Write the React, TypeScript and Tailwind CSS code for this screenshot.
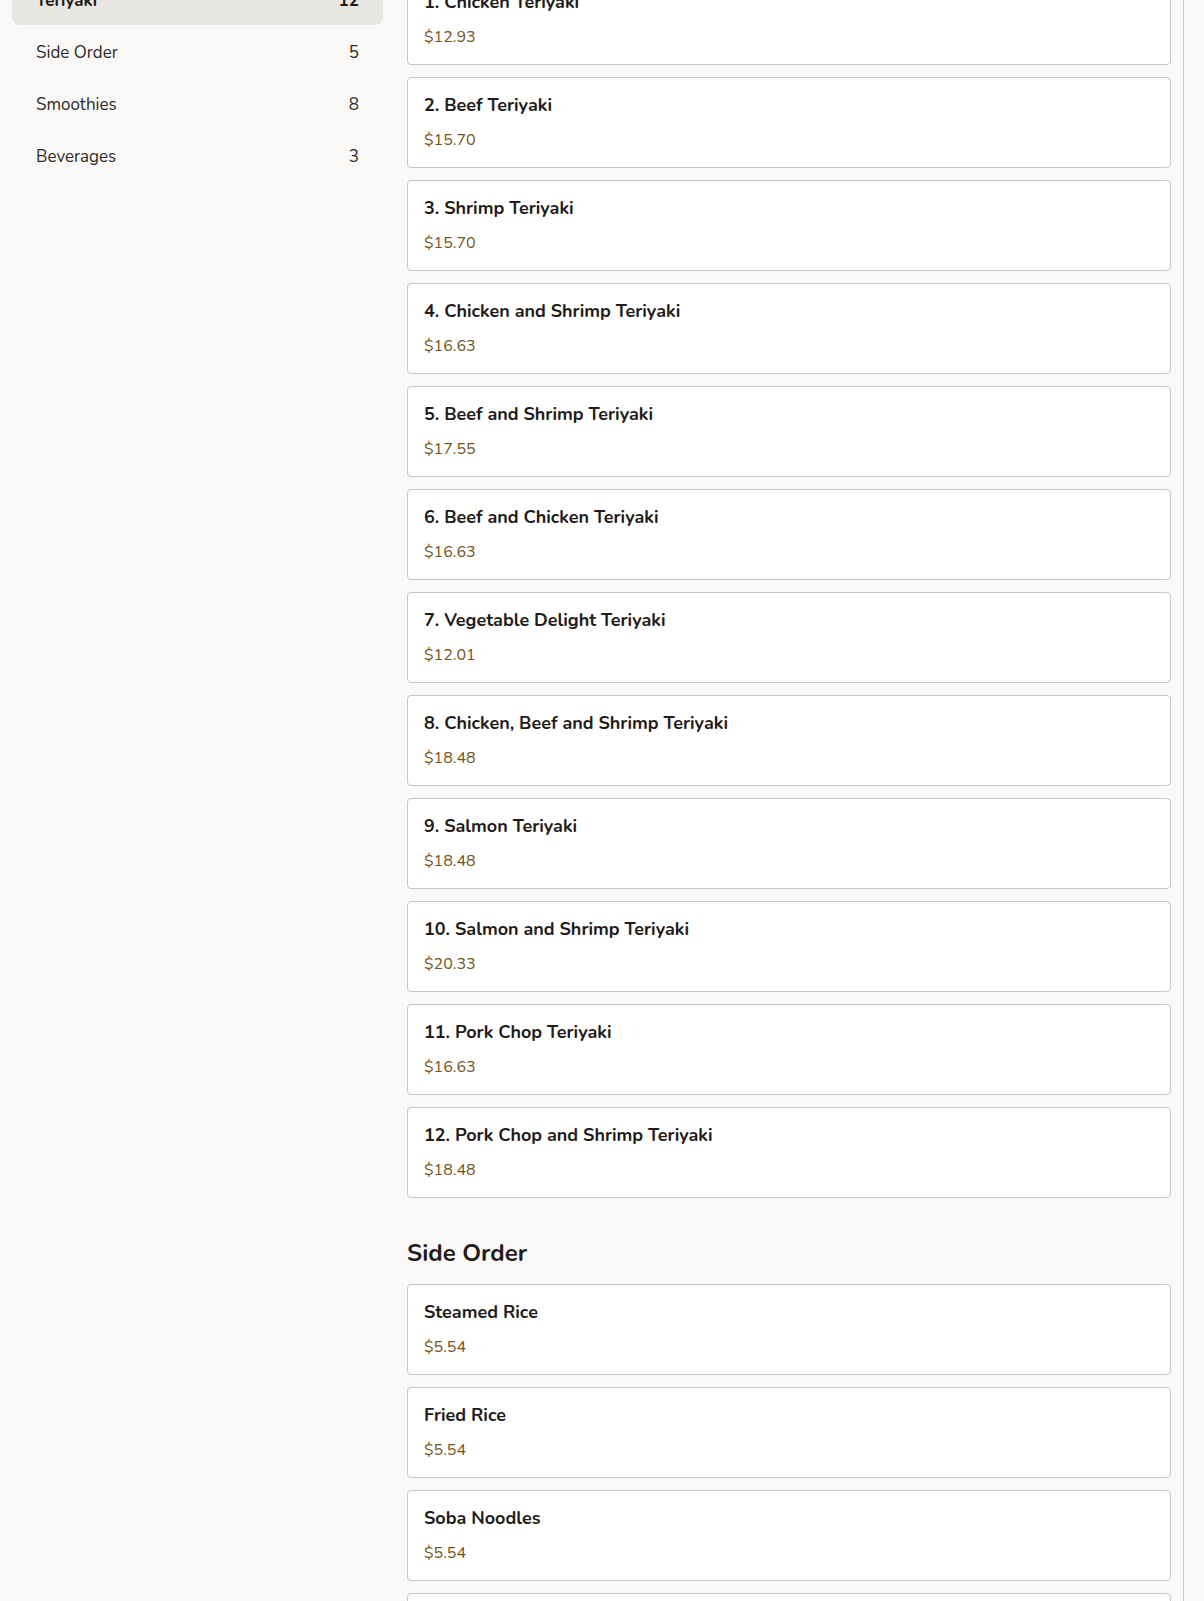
const categories = [
  { name: "Teriyaki", count: 12 },
  { name: "Side Order", count: 5 },
  { name: "Smoothies", count: 8 },
  { name: "Beverages", count: 3 },
];

const sections = [
  {
    title: "Teriyaki",
    items: [
      { name: "1. Chicken Teriyaki", price: 12.93 },
      { name: "2. Beef Teriyaki", price: 15.7 },
      { name: "3. Shrimp Teriyaki", price: 15.7 },
      { name: "4. Chicken and Shrimp Teriyaki", price: 16.63 },
      { name: "5. Beef and Shrimp Teriyaki", price: 17.55 },
      { name: "6. Beef and Chicken Teriyaki", price: 16.63 },
      { name: "7. Vegetable Delight Teriyaki", price: 12.01 },
      { name: "8. Chicken, Beef and Shrimp Teriyaki", price: 18.48 },
      { name: "9. Salmon Teriyaki", price: 18.48 },
      { name: "10. Salmon and Shrimp Teriyaki", price: 20.33 },
      { name: "11. Pork Chop Teriyaki", price: 16.63 },
      { name: "12. Pork Chop and Shrimp Teriyaki", price: 18.48 },
    ],
  },
  {
    title: "Side Order",
    items: [
      { name: "Steamed Rice", price: 5.54 },
      { name: "Fried Rice", price: 5.54 },
      { name: "Soba Noodles", price: 5.54 },
      { name: "Gyoza", price: 6.47 },
      { name: "Miso Soup", price: 3.69 },
    ],
  },
];

const App = () => {
  const active = "Teriyaki";

  return (
    <div
      className="h-[1601px] overflow-hidden bg-[#faf9f7] text-[#231b17]"
      style={{ fontFamily: '"Nunito", "Lato", "Noto Sans", sans-serif' }}
    >
      <div className="flex">
        {/* Category list */}
        <aside className="w-[395px] shrink-0 px-3">
          <nav className="-mt-[23px] flex flex-col gap-1">
            {categories.map((c) => (
              <button
                key={c.name}
                className={`flex items-center justify-between rounded-lg px-6 py-3 text-left text-[17px] leading-6 ${
                  c.name === active
                    ? "bg-[#e7e6e3] font-bold text-[#1f1a17]"
                    : "text-[#2e2a27]"
                }`}
              >
                <span>{c.name}</span>
                <span>{c.count}</span>
              </button>
            ))}
          </nav>
        </aside>

        {/* Menu */}
        <main className="w-[789px] shrink-0 border-r border-[#cfcdca] px-3">
          <div className="-mt-[26px] flex flex-col">
            {sections.map((s, i) => (
              <section key={s.title} className={i > 0 ? "mt-10" : ""}>
                {i > 0 && (
                  <h2 className="mb-4 text-2xl font-bold leading-[30px] text-[#231b17]">
                    {s.title}
                  </h2>
                )}
                <div className="flex flex-col gap-3">
                  {s.items.map((item) => (
                    <div
                      key={item.name}
                      className="rounded border border-[#c9c7c4] bg-white px-4 pt-4 pb-[15px]"
                    >
                      <h3 className="text-lg font-bold leading-[22px] text-[#231b17]">
                        {item.name}
                      </h3>
                      <p className="mt-3 text-base leading-6 text-[#735422]">
                        ${item.price.toFixed(2)}
                      </p>
                    </div>
                  ))}
                </div>
              </section>
            ))}
          </div>
        </main>
        <div className="flex-1" />
      </div>
    </div>
  );
};

export default App;
